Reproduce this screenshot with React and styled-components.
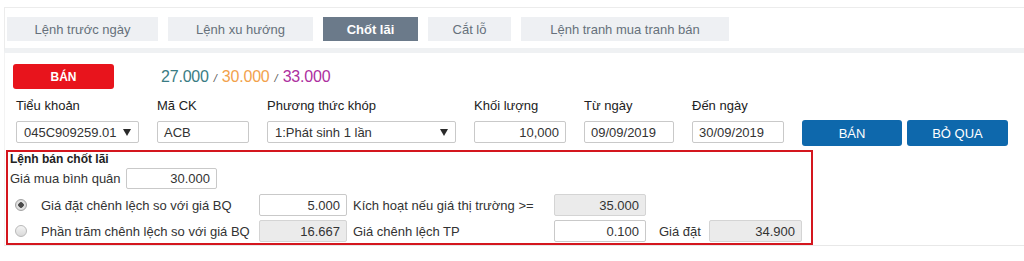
import React from 'react';
import styled, { createGlobalStyle } from 'styled-components';

const GlobalStyle = createGlobalStyle`
  body {
    margin: 0;
    background: #fff;
    font-family: 'Liberation Sans', Arial, sans-serif;
    font-size: 13px;
    color: #333;
  }
`;

const tabs = [
  { label: 'Lệnh trước ngày', w: 151 },
  { label: 'Lệnh xu hướng', w: 145 },
  { label: 'Chốt lãi', w: 95, active: true },
  { label: 'Cắt lỗ', w: 83 },
  { label: 'Lệnh tranh mua tranh bán', w: 208 },
];

const App = () => {
  return (
    <>
      <GlobalStyle />
      <Page>
        <TabBar>
          {tabs.map((t) => (
            <Tab key={t.label} $w={t.w} $active={t.active}>{t.label}</Tab>
          ))}
        </TabBar>

        <FormPanel>
          <HeaderRow>
            <SideButton>BÁN</SideButton>
            <Prices>
              <Price $color="#3a7c84">27.000</Price>
              <Slash>/</Slash>
              <Price $color="#f2a24c">30.000</Price>
              <Slash>/</Slash>
              <Price $color="#ad2fa0">33.000</Price>
            </Prices>
          </HeaderRow>

          <FieldRow>
            <Field $w={123}>
              <Label>Tiểu khoản</Label>
              <SelectBox>045C909259.01 <Caret /></SelectBox>
            </Field>
            <Field $w={92}>
              <Label>Mã CK</Label>
              <TextBox>ACB</TextBox>
            </Field>
            <Field $w={189}>
              <Label>Phương thức khóp</Label>
              <SelectBox $spread>1:Phát sinh 1 lần <Caret /></SelectBox>
            </Field>
            <Field $w={92}>
              <Label>Khối lượng</Label>
              <TextBox $right>10,000</TextBox>
            </Field>
            <Field $w={90}>
              <Label>Từ ngày</Label>
              <TextBox>09/09/2019</TextBox>
            </Field>
            <Field $w={92}>
              <Label>Đến ngày</Label>
              <TextBox>30/09/2019</TextBox>
            </Field>
            <ActionGroup>
              <ActionButton $w={100}>BÁN</ActionButton>
              <ActionButton $w={101}>BỎ QUA</ActionButton>
            </ActionGroup>
          </FieldRow>

          <ProfitBox>
            <BoxTitle>Lệnh bán chốt lãi</BoxTitle>
            <BoxRow $top={4}>
              <RowLabel $w={116}>Giá mua bình quân</RowLabel>
              <TextBox $right $w={91} $h={21}>30.000</TextBox>
            </BoxRow>
            <BoxRow $top={5}>
              <RadioLabel>
                <Radio $checked />
                Giá đặt chênh lệch so với giá BQ
              </RadioLabel>
              <TextBox $right $w={88}>5.000</TextBox>
              <RowLabel $w={207} $pad={6}>Kích hoạt nếu giá thị trường &gt;=</RowLabel>
              <TextBox $right $disabled $w={92}>35.000</TextBox>
            </BoxRow>
            <BoxRow $top={4}>
              <RadioLabel>
                <Radio />
                Phần trăm chênh lệch so với giá BQ
              </RadioLabel>
              <TextBox $right $disabled $w={88}>16.667</TextBox>
              <RowLabel $w={207} $pad={6}>Giá chênh lệch TP</RowLabel>
              <TextBox $right $w={92}>0.100</TextBox>
              <RowLabel $w={63} $pad={13}>Giá đặt</RowLabel>
              <TextBox $right $disabled $w={93}>34.900</TextBox>
            </BoxRow>
          </ProfitBox>
        </FormPanel>
      </Page>
    </>
  );
};

const Page = styled.div`
  width: 1024px;
  padding-top: 7px;
`;

const TabBar = styled.div`
  display: flex;
  gap: 10px;
  margin-left: 4px;
  padding: 9px 0 7px 2px;
  border-top: 1px solid #ececec;
  border-left: 1px solid #ececec;
  border-bottom: 5px solid #eff1f3;
`;

const Tab = styled.div`
  width: ${(p) => p.$w}px;
  height: 24px;
  display: flex;
  align-items: center;
  justify-content: center;
  background: ${(p) => (p.$active ? '#6b7a8a' : '#eef0f3')};
  color: ${(p) => (p.$active ? '#fff' : '#66707b')};
  font-weight: ${(p) => (p.$active ? 'bold' : 'normal')};
  font-size: 13px;
`;

const FormPanel = styled.div`
  margin-left: 4px;
  padding: 11px 0 0 1px;
  border-left: 1px solid #f3f3f3;
  border-bottom: 1px solid #e8e8e8;
`;

const HeaderRow = styled.div`
  display: flex;
  align-items: center;
  margin-left: 7px;
`;

const SideButton = styled.div`
  width: 101px;
  height: 25px;
  display: flex;
  align-items: center;
  justify-content: center;
  background: #e8141c;
  color: #fff;
  font-weight: bold;
  font-size: 12px;
  border-radius: 3px;
`;

const Prices = styled.div`
  display: flex;
  align-items: baseline;
  margin-left: 47px;
`;

const Price = styled.span`
  color: ${(p) => p.$color};
  font-size: 16px;
  letter-spacing: -0.2px;
`;

const Slash = styled.span`
  color: #555;
  font-size: 11px;
  font-style: italic;
  margin: 0 5px 0 5px;
`;

const FieldRow = styled.div`
  display: flex;
  gap: 18px;
  margin: 9px 0 0 10px;
`;

const Field = styled.div`
  width: ${(p) => p.$w}px;
  display: flex;
  flex-direction: column;
  gap: 7px;
`;

const Label = styled.div`
  color: #222;
  line-height: 16px;
  white-space: nowrap;
`;

const TextBox = styled.div`
  box-sizing: border-box;
  width: ${(p) => (p.$w ? `${p.$w}px` : '100%')};
  height: ${(p) => p.$h || 22}px;
  flex-shrink: 0;
  display: flex;
  align-items: center;
  justify-content: ${(p) => (p.$right ? 'flex-end' : 'flex-start')};
  padding: 0 6px;
  border: 1px solid ${(p) => (p.$disabled ? '#d4d4d4' : '#c9c9c9')};
  border-radius: 2px;
  background: ${(p) => (p.$disabled ? '#ebebeb' : '#fff')};
  color: #333;
  white-space: nowrap;
`;

const SelectBox = styled(TextBox)`
  justify-content: ${(p) => (p.$spread ? 'space-between' : 'flex-start')};
  gap: 6px;
  padding: 0 7px;
`;

const Caret = styled.span`
  width: 0;
  height: 0;
  border-left: 4px solid transparent;
  border-right: 4px solid transparent;
  border-top: 7px solid #2a2a2a;
  margin-top: 1px;
`;

const ActionGroup = styled.div`
  display: flex;
  gap: 5px;
  margin-top: 22px;
`;

const ActionButton = styled.div`
  width: ${(p) => p.$w}px;
  height: 26px;
  display: flex;
  align-items: center;
  justify-content: center;
  background: #0e68ac;
  color: #fff;
  font-size: 13px;
  border-radius: 3px;
`;

const ProfitBox = styled.div`
  width: 801px;
  margin-top: 4px;
  padding: 0 0 1px 2px;
  border: 2px solid #d4161e;
`;

const BoxTitle = styled.div`
  font-weight: bold;
  font-size: 12px;
  line-height: 10px;
  padding-top: 2px;
  color: #222;
`;

const BoxRow = styled.div`
  display: flex;
  align-items: center;
  margin-top: ${(p) => p.$top}px;
`;

const RowLabel = styled.div`
  box-sizing: border-box;
  width: ${(p) => p.$w}px;
  flex-shrink: 0;
  padding-left: ${(p) => p.$pad || 0}px;
  color: #333;
  white-space: nowrap;
`;

const RadioLabel = styled.div`
  width: 249px;
  flex-shrink: 0;
  display: flex;
  align-items: center;
  gap: 14px;
  padding-left: 5px;
  box-sizing: border-box;
  color: #333;
  white-space: nowrap;
`;

const Radio = styled.span`
  width: 12px;
  height: 12px;
  box-sizing: border-box;
  border-radius: 50%;
  border: 1px solid ${(p) => (p.$checked ? '#a2a2a2' : '#b9b9b9')};
  background: ${(p) =>
    p.$checked
      ? 'radial-gradient(circle, #4a4a4a 0 2.5px, #e4e4e4 3px, #cfcfcf 100%)'
      : 'linear-gradient(#f4f4f4, #d9d9d9)'};
  flex-shrink: 0;
`;

export default App;
